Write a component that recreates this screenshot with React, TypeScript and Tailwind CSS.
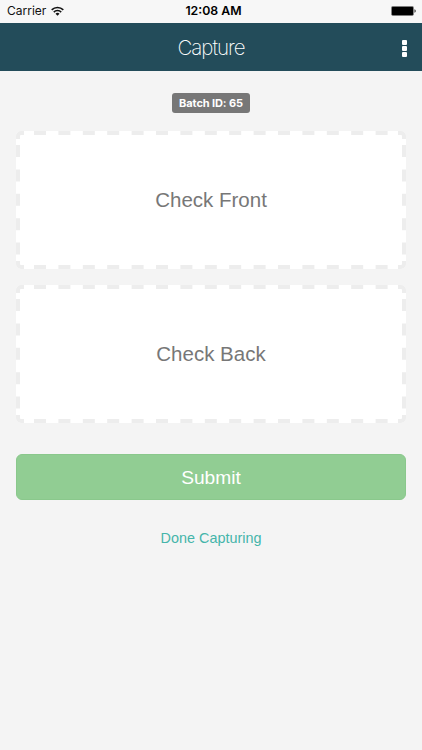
interface CaptureCardProps {
  label: string;
}

function WifiIcon() {
  return (
    <svg className="w-[13px] h-2.5" viewBox="0 0 13 10" fill="none" stroke="#111" strokeWidth="1.6">
      <path d="M.7 3.9a8.1 8.1 0 0 1 11.6 0" />
      <path d="M2.8 6.1a5.2 5.2 0 0 1 7.4 0" />
      <path d="M6.5 9.7 4.5 7.7a2.9 2.9 0 0 1 4 0Z" fill="#111" stroke="none" />
    </svg>
  );
}

function BatteryIcon() {
  return (
    <svg className="w-[25px] h-2.5" viewBox="0 0 25 10">
      <rect x="0.3" y="0.3" width="22.4" height="9.4" rx="1.4" fill="#555" />
      <rect x="1" y="1" width="21" height="8" rx="0.8" fill="#000" />
      <path d="M23.5 3.3c1.6.4 1.6 3 0 3.4Z" fill="#222" />
    </svg>
  );
}

function StatusBar() {
  return (
    <div className="grid h-[23px] grid-cols-[1fr_auto_1fr] items-center bg-[#f7f7f7] pb-px pl-[7px] pr-1.5 font-['Inter',sans-serif] text-[12px] leading-none text-[#111]">
      <div className="flex items-center gap-[5px]">
        <span>Carrier</span>
        <WifiIcon />
      </div>
      <span className="pl-1 text-center text-[12.3px] font-semibold text-black">12:08 AM</span>
      <div className="flex justify-end">
        <BatteryIcon />
      </div>
    </div>
  );
}

function Header() {
  return (
    <header className="grid h-12 grid-cols-[1fr_auto_1fr] items-center bg-[#234c5a] px-[15px] pt-0.5 text-white">
      <h1 className="col-start-2 font-['Inter',sans-serif] text-[20.5px] font-extralight leading-6 tracking-[-1px]">
        Capture
      </h1>
      <button type="button" aria-label="Menu" className="justify-self-end">
        <svg className="block w-[5px] h-[17px]" viewBox="0 0 5 17" fill="#fff">
          <rect width="5" height="5" rx="1" />
          <rect y="6" width="5" height="5" rx="1" />
          <rect y="12" width="5" height="5" rx="1" />
        </svg>
      </button>
    </header>
  );
}

function DashedBorder() {
  return (
    <svg
      className="absolute inset-0 h-full w-full"
      viewBox="0 0 390 138"
      fill="none"
      stroke="#ededed"
      strokeWidth="4"
    >
      <path d="M18 2H372M18 136H372" strokeDasharray="12 12.4" />
      <path d="M2 14V125M388 14V125" strokeDasharray="12 12.4" />
      <path d="M2 8V5a3 3 0 0 1 3-3h3M382 2h3a3 3 0 0 1 3 3v3M388 130v3a3 3 0 0 1-3 3h-3M8 136H5a3 3 0 0 1-3-3v-3" />
    </svg>
  );
}

function CaptureCard({ label }: CaptureCardProps) {
  return (
    <button
      type="button"
      className="relative flex h-[138px] w-full items-center justify-center rounded-[5px] bg-white pt-px text-[20.5px] leading-none text-[#777]"
    >
      <DashedBorder />
      <span>{label}</span>
    </button>
  );
}

export default function App() {
  return (
    <div className="min-h-screen bg-[#f4f4f4] font-['Liberation_Sans',sans-serif]">
      <StatusBar />
      <Header />
      <main className="flex flex-col items-center px-4 pt-[22px]">
        <span className="flex h-5 w-[78px] items-center justify-center rounded-[3px] bg-[#777] font-['Inter',sans-serif] text-[11px] font-bold leading-none tracking-[-0.1px] text-white">
          Batch ID: 65
        </span>
        <div className="mt-[18px] flex w-full flex-col gap-4">
          <CaptureCard label="Check Front" />
          <CaptureCard label="Check Back" />
        </div>
        <button
          type="button"
          className="mt-[31px] h-[46px] w-full rounded-md border border-[#8ac88c] bg-[#91cd93] pt-px text-[19.2px] leading-none text-white"
        >
          Submit
        </button>
        <a href="#" className="mt-[30px] text-[14.4px] leading-4 text-[#45b5aa]">
          Done Capturing
        </a>
      </main>
    </div>
  );
}
